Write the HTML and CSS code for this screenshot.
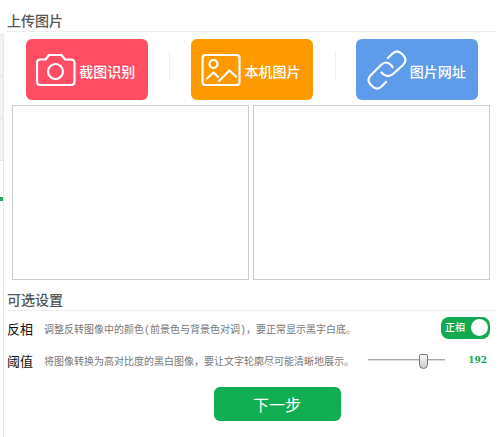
FILE: index.html
```html
<!DOCTYPE html>
<html lang="zh-CN">
<head>
    <meta charset="UTF-8">
    <meta name="viewport" content="width=device-width, initial-scale=1.0">
    <title>上传图片</title>
    <link rel="stylesheet" href="styles.css">
</head>
<body>
<div class="page">
    <div class="side">
        <div class="side-item"></div>
        <div class="side-item"></div>
        <div class="side-item"></div>
        <div class="side-mark"></div>
    </div>
    <form class="main" action="#">
        <h2 class="title">上传图片</h2>
        <div class="source-list">
            <div class="source-item">
                <button type="button" class="btn-source red">
                    <svg width="40" height="34" viewBox="0 0 40 34" fill="none" stroke="currentColor" stroke-width="2.2" stroke-linejoin="round">
                        <path d="M4 6.500H9.500L13 2H25.500L29 6.500H35Q38.500 6.500 38.500 10V28.500Q38.500 32 35 32H4Q1 32 1 28.500V10Q1 6.500 4 6.500Z"/>
                        <circle cx="19.500" cy="18.500" r="7.500"/>
                    </svg>
                    <span>截图识别</span>
                </button>
            </div>
            <div class="source-item">
                <button type="button" class="btn-source orange">
                    <svg width="40" height="34" viewBox="0 0 40 34" fill="none" stroke="currentColor" stroke-width="2.2" stroke-linecap="round" stroke-linejoin="round">
                        <rect x="1.500" y="2" width="37" height="30" rx="3"/>
                        <circle cx="12.500" cy="11" r="4"/>
                        <path d="M6 25.500L12.500 19.500L17 24M18 28L28.500 17.500L35 23.500"/>
                    </svg>
                    <span>本机图片</span>
                </button>
            </div>
            <div class="source-item">
                <button type="button" class="btn-source blue">
                    <svg width="40" height="40" viewBox="0 0 40 40" fill="none" stroke="currentColor" stroke-width="2.2" stroke-linecap="round" stroke-linejoin="round">
                        <path d="M21 8L25 4Q30 -1 35 4L36 5Q41 10 36 15L26 24Q21 28 16 24L14.500 22.500"/>
                        <path d="M25.500 17L24 15Q19 10 14 15L4 25Q-1 30 4 35L5 36Q10 41 15 36L19 32"/>
                    </svg>
                    <span>图片网址</span>
                </button>
            </div>
        </div>
        <div class="preview-list">
            <div class="preview"></div>
            <div class="preview"></div>
        </div>
        <h2 class="title title-option">可选设置</h2>
        <div class="option">
            <label class="option-name" for="invert">反相</label>
            <span class="option-info">调整反转图像中的颜色(前景色与背景色对调)，要正常显示黑字白底。</span>
            <label class="switch">
                <input type="checkbox" id="invert" name="invert" checked>
                <span>正相</span>
            </label>
        </div>
        <div class="option">
            <label class="option-name" for="threshold">阈值</label>
            <span class="option-info">将图像转换为高对比度的黑白图像，要让文字轮廓尽可能清晰地展示。</span>
            <input class="range" type="range" id="threshold" name="threshold" min="0" max="255" value="192">
            <output class="range-value" for="threshold">192</output>
        </div>
        <div class="btn-layout">
            <button type="button" class="btn-next">下一步</button>
        </div>
    </form>
</div>
<script>
    let threshold = document.getElementById("threshold");
    threshold.oninput = function(){
        document.querySelector(".range-value").textContent = threshold.value;
    }
</script>
</body>
</html>
```

FILE: styles.css
```css
*{
    box-sizing: border-box;
}
body{
    margin: 0;
    background-color: #fff;
    font-family: "Liberation Sans", "Noto Sans CJK SC", sans-serif;
    color: #333;
}
button, input{
    font-family: inherit;
}
.page{
    display: flex;
    min-height: 100vh;
}
/* 左侧菜单边缘 */
.side{
    width: 4px;
    margin-top: 34px;
    border-top: 1px solid #e4e4e4;
    border-right: 1px solid #e8e8e8;
}
.side-item{
    height: 42px;
    background-color: #f3f3f3;
    border-bottom: 1px solid #e4e4e4;
}
.side-mark{
    height: 4px;
    margin-top: 36px;
    background-color: #2ba562;
}
.main{
    flex: 1;
    min-width: 0;
    padding-top: 11px;
}
.title{
    margin: 0 3px;
    height: 21px;
    line-height: 20px;
    border-bottom: 1px solid #eee;
    font-size: 14px;
    font-weight: 500;
    color: #555;
}
.source-list{
    display: grid;
    grid-template-columns: repeat(3, 1fr);
    padding: 7px 0 5px;
}
.source-item{
    display: flex;
    align-items: center;
    justify-content: center;
    position: relative;
}
.source-item + .source-item::before{
    content: "";
    position: absolute;
    left: 0;
    top: 12px;
    height: 29px;
    border-left: 1px solid #eee;
}
.btn-source{
    display: flex;
    align-items: center;
    justify-content: center;
    gap: 3px;
    width: 122px;
    height: 61px;
    padding: 0 2px 0 0;
    border: none;
    border-radius: 6px;
    color: #fff;
    font-size: 14px;
    font-weight: 500;
    cursor: pointer;
}
.btn-source span{
    padding-top: 2px;
}
.red{
    background-color: #ff4e63;
}
.orange{
    background-color: #ff9900;
}
.blue{
    background-color: #5e9beb;
}
.preview-list{
    display: grid;
    grid-template-columns: 1fr 1fr;
    gap: 4px;
    padding: 0 10px 0 8px;
}
.preview{
    height: 175px;
    border: 1px solid #ccc;
}
.title-option{
    margin-top: 10px;
}
.option{
    display: flex;
    align-items: center;
    height: 34px;
    padding: 0 10px 0 3px;
}
.option + .option{
    height: 30px;
}
.option-name{
    width: 37px;
    font-size: 13px;
    color: #111;
}
.option-info{
    flex: 1;
    font-family: "Liberation Mono", "Noto Sans CJK SC", monospace;
    font-size: 10px;
    white-space: nowrap;
    color: #777;
}
.switch{
    position: relative;
    width: 49px;
    height: 22px;
    color: #fff;
    font-size: 10px;
    font-weight: 500;
    line-height: 22px;
}
.switch input{
    appearance: none;
    display: block;
    width: 49px;
    height: 22px;
    margin: 0;
    padding: 2px;
    border-radius: 8px;
    background-color: #11aa50;
    cursor: pointer;
}
.switch input::before{
    content: "";
    display: block;
    width: 17px;
    height: 17px;
    border-radius: 50%;
    background-color: #fff;
}
.switch input:checked::before{
    margin-left: auto;
}
.switch span{
    position: absolute;
    left: 4px;
    top: 0;
}
.range{
    appearance: none;
    width: 77px;
    height: 16px;
    margin: 0;
    background: transparent;
}
.range::-webkit-slider-runnable-track{
    height: 2px;
    background-color: #ddd;
    border-top: 1px solid #aaa;
}
.range::-webkit-slider-thumb{
    appearance: none;
    width: 9px;
    height: 15px;
    margin-top: -6px;
    border: 1px solid #777;
    border-radius: 2px 2px 5px 5px;
    background-image: linear-gradient(#f8f8f8, #ccc);
}
.range-value{
    width: 45px;
    padding-right: 3px;
    text-align: right;
    font-family: "DejaVu Serif", serif;
    font-size: 9px;
    font-weight: bold;
    color: #11aa50;
}
.btn-layout{
    display: flex;
    justify-content: center;
    padding: 12px 0 16px 50px;
}
.btn-next{
    width: 127px;
    height: 34px;
    padding: 0;
    border: none;
    border-radius: 6px;
    background-color: #11ad52;
    color: #fff;
    font-size: 16px;
    cursor: pointer;
}
```
